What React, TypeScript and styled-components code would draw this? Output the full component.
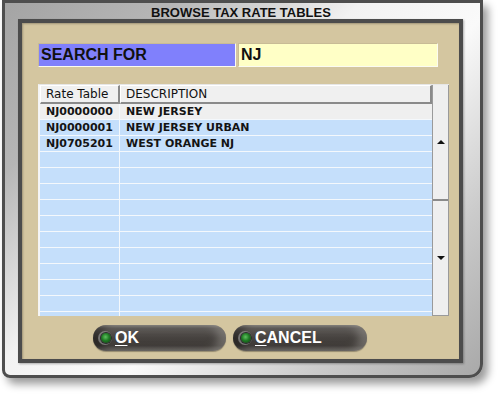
import React from 'react';
import styled, { createGlobalStyle } from 'styled-components';

const GlobalStyle = createGlobalStyle`
  html, body {
    margin: 0;
    padding: 0;
    background: #ffffff;
  }
  body {
    font-family: 'Liberation Sans', Arial, sans-serif;
  }
`;

const Page = styled.div`
  width: 501px;
  height: 399px;
  padding: 0 0 0 2px;
  box-sizing: border-box;
  overflow: hidden;
`;

const Window = styled.div`
  width: 481px;
  height: 378px;
  box-sizing: border-box;
  border: 3px solid #4e4e4e;
  border-radius: 0 0 14px 8px;
  background: linear-gradient(
    135deg,
    #a4a4a4 0%,
    #b6b6b6 20%,
    #f2f2f2 42%,
    #fafafa 58%,
    #cbcbcb 80%,
    #a9a9a9 100%
  );
  box-shadow: 5px 6px 8px rgba(0, 0, 0, 0.4);
  display: flex;
  flex-direction: column;
  padding: 0 16px 11px 13px;
`;

const Title = styled.div`
  height: 16px;
  flex: none;
  box-sizing: border-box;
  padding-top: 3px;
  line-height: 13px;
  text-align: center;
  font-family: 'Liberation Sans', Arial, sans-serif;
  font-weight: bold;
  font-size: 13px;
  color: #111;
  white-space: nowrap;
`;

const Panel = styled.div`
  width: 445px;
  height: 344px;
  box-sizing: border-box;
  border: 4px solid #4c4c4c;
  background: #d4c6a0;
  box-shadow: inset 1px 1px 2px rgba(0, 0, 0, 0.25), 1px 1px 2px rgba(0, 0, 0, 0.3);
  padding: 20px 16px 7px 16px;
  display: flex;
  flex-direction: column;
`;

const SearchRow = styled.div`
  display: flex;
  gap: 2px;
  height: 24px;
`;

const Field = styled.div<{ $bg: string; $w: number }>`
  width: ${(p) => p.$w}px;
  box-sizing: border-box;
  background: ${(p) => p.$bg};
  border-right: 1px solid #fbfbf2;
  border-bottom: 1px solid #fbfbf2;
  border-top: 1px solid #c8bb96;
  border-left: 1px solid #c8bb96;
  font-family: 'Liberation Sans', Arial, sans-serif;
  font-weight: bold;
  font-size: 16px;
  color: #111;
  line-height: 22px;
  padding-left: 2px;
`;

const Grid = styled.div`
  margin-top: 17px;
  width: 411px;
  height: 232px;
  box-sizing: border-box;
  border-top: 1px solid #e6e6e6;
  border-left: 1px solid #f4f4f4;
  display: flex;
  background: #c5dffb;
`;

const TableArea = styled.div`
  flex: 1;
  display: flex;
  flex-direction: column;
  overflow: hidden;
  padding-left: 1px;
  background: #f6f6f6;
`;

const HeaderRow = styled.div`
  display: flex;
  height: 19px;
  flex: none;
`;

const HeadCell = styled.div<{ $w?: number }>`
  ${(p) => (p.$w ? `width: ${p.$w}px;` : 'flex: 1;')}
  box-sizing: border-box;
  background: #f0f0f0;
  border-top: 1px solid #ffffff;
  border-left: 1px solid #ffffff;
  border-right: 2px solid #8a8a8a;
  border-bottom: 2px solid #8a8a8a;
  font-family: 'DejaVu Sans', Verdana, sans-serif;
  font-size: 12px;
  color: #111;
  line-height: 16px;
  padding-left: 5px;
  white-space: nowrap;
`;

const Body = styled.div`
  flex: 1;
  background: #c5dffb;
  overflow: hidden;
`;

const Row = styled.div<{ $first?: boolean }>`
  display: flex;
  height: 16px;
  box-sizing: border-box;
  border-bottom: 1px solid #f4f8fc;
  background: ${(p) => (p.$first ? '#efefef' : '#c5dffb')};
`;

const Cell = styled.div<{ $w?: number }>`
  ${(p) => (p.$w ? `width: ${p.$w}px;` : 'flex: 1;')}
  box-sizing: border-box;
  ${(p) => (p.$w ? 'border-right: 1px solid #f4f8fc;' : '')}
  font-family: 'DejaVu Sans', Verdana, sans-serif;
  font-weight: bold;
  font-size: 11px;
  color: #141414;
  line-height: 15px;
  padding-left: 6px;
  white-space: nowrap;
`;

const ScrollBar = styled.div`
  width: 17px;
  flex: none;
  display: flex;
  flex-direction: column;
  background: #efefef;
  border-left: 1px solid #9a9a9a;
  border-right: 1px solid #9a9a9a;
  border-bottom: 1px solid #9a9a9a;
  box-sizing: border-box;
`;

const ScrollButton = styled.div<{ $divider?: boolean }>`
  flex: 1;
  display: flex;
  align-items: center;
  justify-content: center;
  ${(p) => (p.$divider ? 'border-top: 2px solid #8a8a8a;' : '')}
`;

const Arrow = styled.div<{ $down?: boolean }>`
  width: 0;
  height: 0;
  border-left: 4px solid transparent;
  border-right: 4px solid transparent;
  ${(p) =>
    p.$down ? 'border-top: 4px solid #111;' : 'border-bottom: 4px solid #111;'}
`;

const ButtonRow = styled.div`
  margin-top: 9px;
  display: flex;
  gap: 7px;
  padding-left: 55px;
`;

const PillButton = styled.button<{ $w: number }>`
  width: ${(p) => p.$w}px;
  height: 26px;
  border: none;
  border-radius: 13px;
  padding: 0 0 0 8px;
  display: flex;
  align-items: center;
  gap: 4px;
  background: linear-gradient(
    to bottom,
    #8e8a86 0%,
    #5c5855 12%,
    #46423f 50%,
    #3e3a37 80%,
    #6a6662 100%
  );
  box-shadow: inset -8px 0 8px rgba(190, 185, 180, 0.35),
    inset 8px 0 6px rgba(0, 0, 0, 0.35), 0 1px 1px rgba(0, 0, 0, 0.3);
  font-family: 'Liberation Sans', Arial, sans-serif;
  font-weight: bold;
  font-size: 16px;
  color: #ffffff;
  cursor: pointer;
`;

const Led = styled.span`
  width: 10px;
  height: 10px;
  border-radius: 50%;
  background: radial-gradient(circle at 45% 40%, #5fc15f 0%, #1f7a24 45%, #0d3a10 100%);
  box-shadow: 0 0 0 1px #2a2a2a, -1px 0 0 2px rgba(170, 170, 170, 0.55);
  flex: none;
`;

const Hot = styled.span`
  text-decoration: underline;
  text-underline-offset: 2px;
`;

const rows = [
  { code: 'NJ0000000', desc: 'NEW JERSEY' },
  { code: 'NJ0000001', desc: 'NEW JERSEY URBAN' },
  { code: 'NJ0705201', desc: 'WEST ORANGE NJ' },
];

export default function App() {
  const filler = Array.from({ length: 11 });
  return (
    <>
      <GlobalStyle />
      <Page>
        <Window>
          <Title>BROWSE TAX RATE TABLES</Title>
          <Panel>
            <SearchRow>
              <Field $bg="#8080fc" $w={198}>SEARCH FOR</Field>
              <Field $bg="#ffffc6" $w={200}>NJ</Field>
            </SearchRow>
            <Grid>
              <TableArea>
                <HeaderRow>
                  <HeadCell $w={80}>Rate Table</HeadCell>
                  <HeadCell>DESCRIPTION</HeadCell>
                </HeaderRow>
                <Body>
                  {rows.map((r, i) => (
                    <Row key={r.code} $first={i === 0}>
                      <Cell $w={80}>{r.code}</Cell>
                      <Cell>{r.desc}</Cell>
                    </Row>
                  ))}
                  {filler.map((_, i) => (
                    <Row key={i}>
                      <Cell $w={80} />
                      <Cell />
                    </Row>
                  ))}
                </Body>
              </TableArea>
              <ScrollBar>
                <ScrollButton>
                  <Arrow />
                </ScrollButton>
                <ScrollButton $divider>
                  <Arrow $down />
                </ScrollButton>
              </ScrollBar>
            </Grid>
            <ButtonRow>
              <PillButton $w={133}>
                <Led />
                <span>
                  <Hot>O</Hot>K
                </span>
              </PillButton>
              <PillButton $w={134}>
                <Led />
                <span>
                  <Hot>C</Hot>ANCEL
                </span>
              </PillButton>
            </ButtonRow>
          </Panel>
        </Window>
      </Page>
    </>
  );
}
